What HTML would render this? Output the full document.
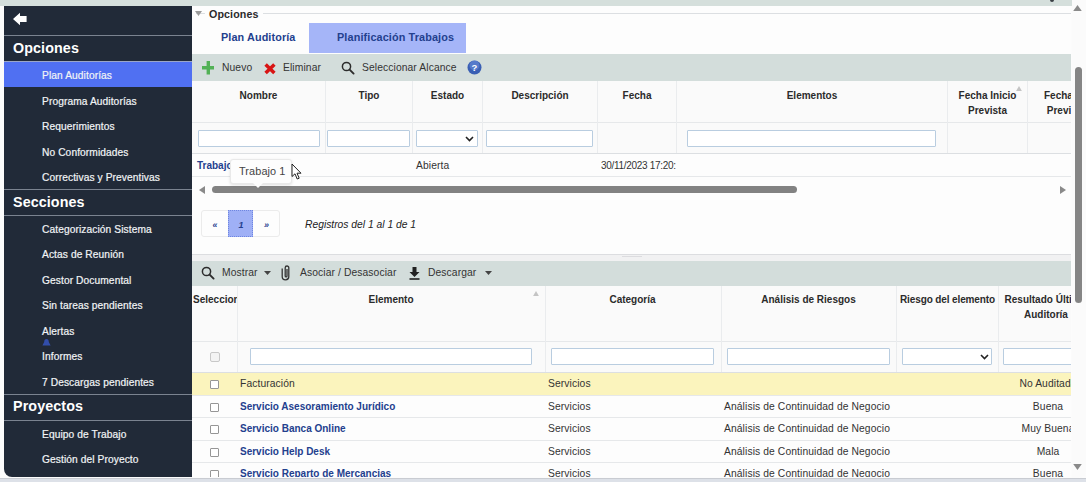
<!DOCTYPE html>
<html><head><meta charset="utf-8"><title>Plan Auditorías</title>
<style>
*{box-sizing:border-box;margin:0;padding:0}
html,body{width:1086px;height:482px;overflow:hidden;background:#fcfcfc;font-family:"Liberation Sans",sans-serif;color:#333}
.a{position:absolute;white-space:nowrap}
#top{left:0;top:0;width:1072px;height:6px;background:#d5dfdc}
#side{left:4px;top:6px;width:188px;height:471px;background:#212a38;z-index:2;border-radius:0 0 0 8px;overflow:hidden}
#side .ln{position:absolute;left:0;width:188px;height:1px;background:#7b8390}
#side .h{position:absolute;left:9px;color:#fff;font-weight:bold;font-size:15.5px;line-height:20px;letter-spacing:.1px}
#side .i{position:absolute;left:38px;color:#f2f4f6;font-size:11.5px;line-height:16px;letter-spacing:.05px}
#side .sel{position:absolute;left:0;width:188px;top:55px;height:26px;background:#5070f2}

#side .h{font-size:14.3px}
#side .i{font-size:10.2px;letter-spacing:.1px;-webkit-text-stroke:.2px #f2f4f6}
#main{left:191px;top:6px;width:880px;height:471px;background:#fdfdfd;overflow:hidden}
.t{position:absolute;white-space:nowrap;font-size:10.3px;line-height:14px;color:#333;letter-spacing:.1px}
.b{font-weight:bold;color:#2b2b2b}
.lk{font-weight:bold;color:#23408e;letter-spacing:0;font-size:10px}
.band{position:absolute;left:1px;width:881px;background:#d3dddb}
.vl{position:absolute;width:1px;background:#eaecee}
.hl{position:absolute;height:1px;background:#e6e8ea;left:1px;width:881px}
.in{position:absolute;height:17px;background:#fff;border:1px solid #b9cde0;border-radius:1px}
.hc{position:absolute;text-align:center;font-weight:bold;font-size:10px;line-height:14.5px;color:#2b2b2b;white-space:nowrap;letter-spacing:0}
.cb{position:absolute;width:9px;height:9px;border:1px solid #969696;background:#fff;border-radius:1px}
</style></head><body>
<div class="a" id="top"></div>
<div class="a" style="left:1050px;top:0;width:4px;height:2px;background:#3a3f44;border-radius:0 0 2px 2px"></div>
<div class="a" id="side">
 <svg class="a" style="left:9px;top:6px" width="15" height="14" viewBox="0 0 15 14"><path d="M0 7 L7 0.8 L7 4 L13.6 4 L13.6 10 L7 10 L7 13.2 Z" fill="#fff"/></svg>
 <div class="ln" style="top:29px"></div>
 <div class="h" style="top:32px">Opciones</div>
 <div class="ln" style="top:55px"></div>
 <div class="sel"></div>
 <div class="ln" style="top:55px;background:#9aa6c8"></div>
 <div class="i" style="top:62px">Plan Auditorías</div>
 <div class="i" style="top:88px">Programa Auditorías</div>
 <div class="i" style="top:113px">Requerimientos</div>
 <div class="i" style="top:139px">No Conformidades</div>
 <div class="i" style="top:164px">Correctivas y Preventivas</div>
 <div class="ln" style="top:183px"></div>
 <div class="h" style="top:186px">Secciones</div>
 <div class="ln" style="top:209px"></div>
 <div class="i" style="top:216px">Categorización Sistema</div>
 <div class="i" style="top:241px">Actas de Reunión</div>
 <div class="i" style="top:267px">Gestor Documental</div>
 <div class="i" style="top:292px">Sin tareas pendientes</div>
 <div class="i" style="top:318px">Alertas</div>
 <svg class="a" style="left:38px;top:333px" width="9" height="7" viewBox="0 0 9 7"><path d="M4.5 0C6 0 6.8 1.2 6.8 3L8.6 6.4H0.4L2.2 3C2.2 1.2 3 0 4.5 0Z" fill="#3452b8" opacity=".9"/></svg>
 <div class="i" style="top:343px">Informes</div>
 <div class="i" style="top:369px">7 Descargas pendientes</div>
 <div class="ln" style="top:388px"></div>
 <div class="h" style="top:390px">Proyectos</div>
 <div class="ln" style="top:414px"></div>
 <div class="i" style="top:421px">Equipo de Trabajo</div>
 <div class="i" style="top:446px">Gestión del Proyecto</div>
</div>

<div class="a" id="main">
 <!-- fieldset legend -->
 <div class="hl" style="top:7px;left:5px;width:877px;background:#dcdfe2"></div>
 <svg class="a" style="left:4px;top:5px" width="7" height="5" viewBox="0 0 7 5"><path d="M0 0H7L3.5 5Z" fill="#9a9a9a"/></svg>
 <div class="t b" style="left:14px;top:1px;font-size:10.7px;background:#fdfdfd;padding:0 4px">Opciones</div>
 <!-- tabs -->
 <div class="a" style="left:118px;top:17px;width:157px;height:30px;background:#a5b5f8"></div>
 <div class="t lk" style="left:30px;top:24px;font-size:10.8px;letter-spacing:.12px">Plan Auditoría</div>
 <div class="t lk" style="left:146px;top:24px;font-size:10.85px;letter-spacing:.12px">Planificación Trabajos</div>
 <!-- toolbar 1 -->
 <div class="band" style="top:48px;height:27px"></div>
 <svg class="a" style="left:10.6px;top:55.3px" width="12.6" height="13.4" viewBox="0 0 12.6 13.4"><path d="M4.6 0H8V5H12.6V8.4H8V13.4H4.6V8.4H0V5H4.6Z" fill="#52b156"/></svg>
 <div class="t" style="left:31px;top:55px">Nuevo</div>
 <svg class="a" style="left:72.6px;top:57.3px" width="12" height="11.4" viewBox="0 0 12 11.4"><path d="M1.6 1.4L10.4 10M10.4 1.4L1.6 10" stroke="#d81414" stroke-width="3.5" stroke-linecap="butt"/></svg>
 <div class="t" style="left:92px;top:55px">Eliminar</div>
 <svg class="a" style="left:150px;top:55px" width="14" height="14" viewBox="0 0 14 14"><circle cx="5.5" cy="5.5" r="4.1" fill="none" stroke="#2c2c2c" stroke-width="1.5"/><path d="M8.6 8.6L12.6 12.6" stroke="#2c2c2c" stroke-width="1.9" stroke-linecap="round"/></svg>
 <div class="t" style="left:171px;top:55px">Seleccionar Alcance</div>
 <svg class="a" style="left:276px;top:54px" width="15" height="15" viewBox="0 0 15 15"><circle cx="7.5" cy="7.5" r="7" fill="#3a5fb4"/><circle cx="7.5" cy="5.5" r="5" fill="#6d90dc" opacity=".55"/><text x="7.5" y="11" text-anchor="middle" font-family="Liberation Sans, sans-serif" font-weight="bold" font-size="9.5" fill="#fff">?</text></svg>
 <!-- table 1 -->
 <div class="a" style="left:1px;top:75px;width:881px;height:72px;background:#fafafa"></div>
 <div class="hl" style="top:116px"></div>
 <div class="hl" style="top:147px;background:#dcdfe2"></div>
 <div class="hl" style="top:170px"></div>
 <div class="vl" style="left:134px;top:75px;height:72px"></div>
 <div class="vl" style="left:221px;top:75px;height:72px"></div>
 <div class="vl" style="left:291px;top:75px;height:72px"></div>
 <div class="vl" style="left:406px;top:75px;height:72px"></div>
 <div class="vl" style="left:485px;top:75px;height:72px"></div>
 <div class="vl" style="left:756px;top:75px;height:72px"></div>
 <div class="vl" style="left:836px;top:75px;height:72px"></div>
 <div class="hc" style="left:1px;width:133px;top:83px">Nombre</div>
 <div class="hc" style="left:135px;width:86px;top:83px">Tipo</div>
 <div class="hc" style="left:222px;width:69px;top:83px">Estado</div>
 <div class="hc" style="left:292px;width:114px;top:83px">Descripción</div>
 <div class="hc" style="left:407px;width:78px;top:83px">Fecha</div>
 <div class="hc" style="left:486px;width:270px;top:83px">Elementos</div>
 <div class="hc" style="left:757px;width:79px;top:83px">Fecha Inicio<br>Prevista</div>
 <div class="hc" style="left:853px;width:60px;top:83px;text-align:left">Fecha Fin<br>&nbsp;Prevista</div>
 <svg class="a" style="left:825px;top:80px" width="6" height="5" viewBox="0 0 7 6"><path d="M3.5 0L7 6H0Z" fill="#c4c4c4"/></svg>
 <div class="in" style="left:7px;top:124px;width:122px"></div>
 <div class="in" style="left:136px;top:124px;width:83px"></div>
 <div class="in" style="left:225px;top:124px;width:62px"></div>
 <svg class="a" style="left:274px;top:130px" width="9" height="6" viewBox="0 0 9 6"><path d="M1 1L4.5 4.5L8 1" fill="none" stroke="#222" stroke-width="1.6"/></svg>
 <div class="in" style="left:295px;top:124px;width:107px"></div>
 <div class="in" style="left:496px;top:124px;width:249px"></div>
 <div class="t lk" style="left:6px;top:153px">Trabajo 1</div>
 <div class="t" style="left:225px;top:153px">Abierta</div>
 <div class="t" style="left:410px;top:153px;font-size:10px;letter-spacing:-.3px">30/11/2023 17:20:</div>
 <!-- h scrollbar -->
 <svg class="a" style="left:8px;top:180px" width="6" height="8" viewBox="0 0 6 8"><path d="M6 0V8L0 4Z" fill="#8a8a8a"/></svg>
 <div class="a" style="left:21px;top:180px;width:585px;height:7px;border-radius:4px;background:#828282"></div>
 <svg class="a" style="left:869px;top:180px" width="6" height="8" viewBox="0 0 6 8"><path d="M0 0V8L6 4Z" fill="#8a8a8a"/></svg>
 <!-- tooltip -->
 <div class="a" style="left:39px;top:153px;width:62px;height:25px;background:#fdfdfd;border:1px solid #e9e9e9;border-radius:3px;box-shadow:0 1px 3px rgba(0,0,0,.12)"></div>
 <svg class="a" style="left:62px;top:177px" width="10" height="5" viewBox="0 0 10 5"><path d="M0 0H10L5 5Z" fill="#fdfdfd"/></svg>
 <div class="t" style="left:48px;top:158px;font-size:10.9px;color:#444">Trabajo 1</div>
 <svg class="a" style="left:100px;top:157px" width="12" height="17" viewBox="0 0 12 17"><path d="M1 1V13.5L4 10.8L6.2 16L8.2 15.2L6 10.2H10Z" fill="#fff" stroke="#222" stroke-width="1"/></svg>
 <!-- pagination -->
 <div class="a" style="left:10px;top:204px;width:79px;height:27px;border:1px solid #ebebeb;border-radius:3px;background:#fdfdfd"></div>
 <div class="a" style="left:37px;top:204px;width:25px;height:27px;background:#9fb0f6;border:1px dotted #6f86e0"></div>
 <div class="t lk" style="left:21.5px;top:212px;font-size:9px;font-style:italic">«</div>
 <div class="t lk" style="left:47.5px;top:212px;font-size:9px;font-style:italic">1</div>
 <div class="t lk" style="left:73px;top:212px;font-size:9px;font-style:italic">»</div>
 <div class="t" style="left:114px;top:212px;font-style:italic;font-size:10.3px;color:#222;letter-spacing:0">Registros del 1 al 1 de 1</div>
 <!-- splitter -->
 <div class="a" style="left:1px;top:248px;width:881px;height:7px;background:#f1f1f2;border-top:1px solid #dcdde0"></div>
 <div class="a" style="left:431px;top:250px;width:20px;height:1px;background:#dcdcdf"></div>
 <!-- toolbar 2 -->
 <div class="band" style="top:255px;height:25px"></div>
 <svg class="a" style="left:10px;top:260px" width="14" height="14" viewBox="0 0 14 14"><circle cx="5.5" cy="5.5" r="4.1" fill="none" stroke="#2c2c2c" stroke-width="1.5"/><path d="M8.6 8.6L12.6 12.6" stroke="#2c2c2c" stroke-width="1.9" stroke-linecap="round"/></svg>
 <div class="t" style="left:31px;top:260px">Mostrar</div>
 <svg class="a" style="left:73px;top:265px" width="7" height="4" viewBox="0 0 7 4"><path d="M0 0H7L3.5 4Z" fill="#444"/></svg>
 <svg class="a" style="left:90px;top:259px" width="9" height="16" viewBox="0 0 9 16"><path d="M1.2 3.5V11.5A3.3 3.3 0 0 0 7.8 11.5V2.8A1.8 1.8 0 0 0 4.2 2.8V11A0.9 0.9 0 0 0 6 11V4" fill="none" stroke="#333" stroke-width="1.3"/></svg>
 <div class="t" style="left:109px;top:260px">Asociar / Desasociar</div>
 <svg class="a" style="left:218px;top:261px" width="11" height="13" viewBox="0 0 11 13"><path d="M3.5 0H7.5V5H10.5L5.5 10L0.5 5H3.5Z" fill="#222"/><rect x="0.5" y="11.2" width="10" height="1.6" fill="#222"/></svg>
 <div class="t" style="left:237px;top:260px">Descargar</div>
 <svg class="a" style="left:294px;top:265px" width="7" height="4" viewBox="0 0 7 4"><path d="M0 0H7L3.5 4Z" fill="#444"/></svg>
 <!-- table 2 -->
 <div class="a" style="left:1px;top:280px;width:881px;height:86px;background:#fafafa"></div>
 <div class="hl" style="top:335px"></div>
 <div class="hl" style="top:366px;background:#dcdfe2"></div>
 <div class="a" style="left:1px;top:367px;width:881px;height:22px;background:#fbf4bd"></div>
 <div class="hl" style="top:389px"></div>
 <div class="hl" style="top:411px"></div>
 <div class="hl" style="top:434px"></div>
 <div class="hl" style="top:456px"></div>
 <div class="vl" style="left:46px;top:280px;height:86px"></div>
 <div class="vl" style="left:354px;top:280px;height:86px"></div>
 <div class="vl" style="left:530px;top:280px;height:86px"></div>
 <div class="vl" style="left:705px;top:280px;height:86px"></div>
 <div class="vl" style="left:807px;top:280px;height:86px"></div>
 <div class="hc" style="left:2px;width:44px;top:287px;text-align:left;overflow:hidden">Selecciona</div>
 <div class="hc" style="left:47px;width:306px;top:287px">Elemento</div>
 <div class="hc" style="left:354px;width:175px;top:287px">Categoría</div>
 <div class="hc" style="left:530px;width:175px;top:287px">Análisis de Riesgos</div>
 <div class="hc" style="left:706px;width:101px;top:287px;letter-spacing:-.12px">Riesgo del elemento</div>
 <div class="hc" style="left:808px;width:90px;top:287px;text-align:left">&nbsp;&nbsp;Resultado Última<br>&nbsp;&nbsp;&nbsp;&nbsp;&nbsp;&nbsp;&nbsp;&nbsp;&nbsp;Auditoría</div>
 <svg class="a" style="left:342px;top:285px" width="6" height="5" viewBox="0 0 7 6"><path d="M3.5 0L7 6H0Z" fill="#c4c4c4"/></svg>
 <div class="cb" style="left:19px;top:346px;width:10px;height:10px;border-color:#c8c8c8;background:#f3f3f3;border-radius:2px"></div>
 <div class="in" style="left:59px;top:342px;width:282px"></div>
 <div class="in" style="left:360px;top:342px;width:163px"></div>
 <div class="in" style="left:536px;top:342px;width:163px"></div>
 <div class="in" style="left:711px;top:342px;width:90px"></div>
 <svg class="a" style="left:789px;top:348px" width="9" height="6" viewBox="0 0 9 6"><path d="M1 1L4.5 4.5L8 1" fill="none" stroke="#222" stroke-width="1.6"/></svg>
 <div class="in" style="left:812px;top:342px;width:90px"></div>
 <div class="cb" style="left:19px;top:374px"></div>
 <div class="t" style="left:49px;top:371px">Facturación</div>
 <div class="t" style="left:357px;top:371px">Servicios</div>
 <div class="t" style="left:808px;width:98px;text-align:center;top:371px">No Auditada</div>
 <div class="cb" style="left:19px;top:397px"></div>
 <div class="t lk" style="left:49px;top:394px">Servicio Asesoramiento Jurídico</div>
 <div class="t" style="left:357px;top:394px">Servicios</div>
 <div class="t" style="left:533px;top:394px">Análisis de Continuidad de Negocio</div>
 <div class="t" style="left:808px;width:98px;text-align:center;top:394px">Buena</div>
 <div class="cb" style="left:19px;top:419px"></div>
 <div class="t lk" style="left:49px;top:416px">Servicio Banca Online</div>
 <div class="t" style="left:357px;top:416px">Servicios</div>
 <div class="t" style="left:533px;top:416px">Análisis de Continuidad de Negocio</div>
 <div class="t" style="left:808px;width:98px;text-align:center;top:416px">Muy Buena</div>
 <div class="cb" style="left:19px;top:442px"></div>
 <div class="t lk" style="left:49px;top:439px">Servicio Help Desk</div>
 <div class="t" style="left:357px;top:439px">Servicios</div>
 <div class="t" style="left:533px;top:439px">Análisis de Continuidad de Negocio</div>
 <div class="t" style="left:808px;width:98px;text-align:center;top:439px">Mala</div>
 <div class="cb" style="left:19px;top:464px"></div>
 <div class="t lk" style="left:49px;top:461px">Servicio Reparto de Mercancias</div>
 <div class="t" style="left:357px;top:461px">Servicios</div>
 <div class="t" style="left:533px;top:461px">Análisis de Continuidad de Negocio</div>
 <div class="t" style="left:808px;width:98px;text-align:center;top:461px">Buena</div>
</div>
<!-- page scrollbar -->
<div class="a" style="left:0;top:478px;width:1086px;height:4px;background:#dde1e8;border-top:1px solid #c9ccd2"></div>
<div class="a" style="left:1072px;top:0;width:14px;height:478px;background:#fbfbfb;border-radius:0 0 8px 0"></div>
<svg class="a" style="left:1073px;top:5px" width="9" height="6" viewBox="0 0 10 7"><path d="M5 0L10 7H0Z" fill="#8a8a8a"/></svg>
<div class="a" style="left:1074.5px;top:67px;width:7.5px;height:236px;border-radius:4px;background:#858585"></div>
<svg class="a" style="left:1073px;top:464px" width="9" height="6" viewBox="0 0 10 7"><path d="M0 0H10L5 7Z" fill="#8a8a8a"/></svg>
</body></html>
